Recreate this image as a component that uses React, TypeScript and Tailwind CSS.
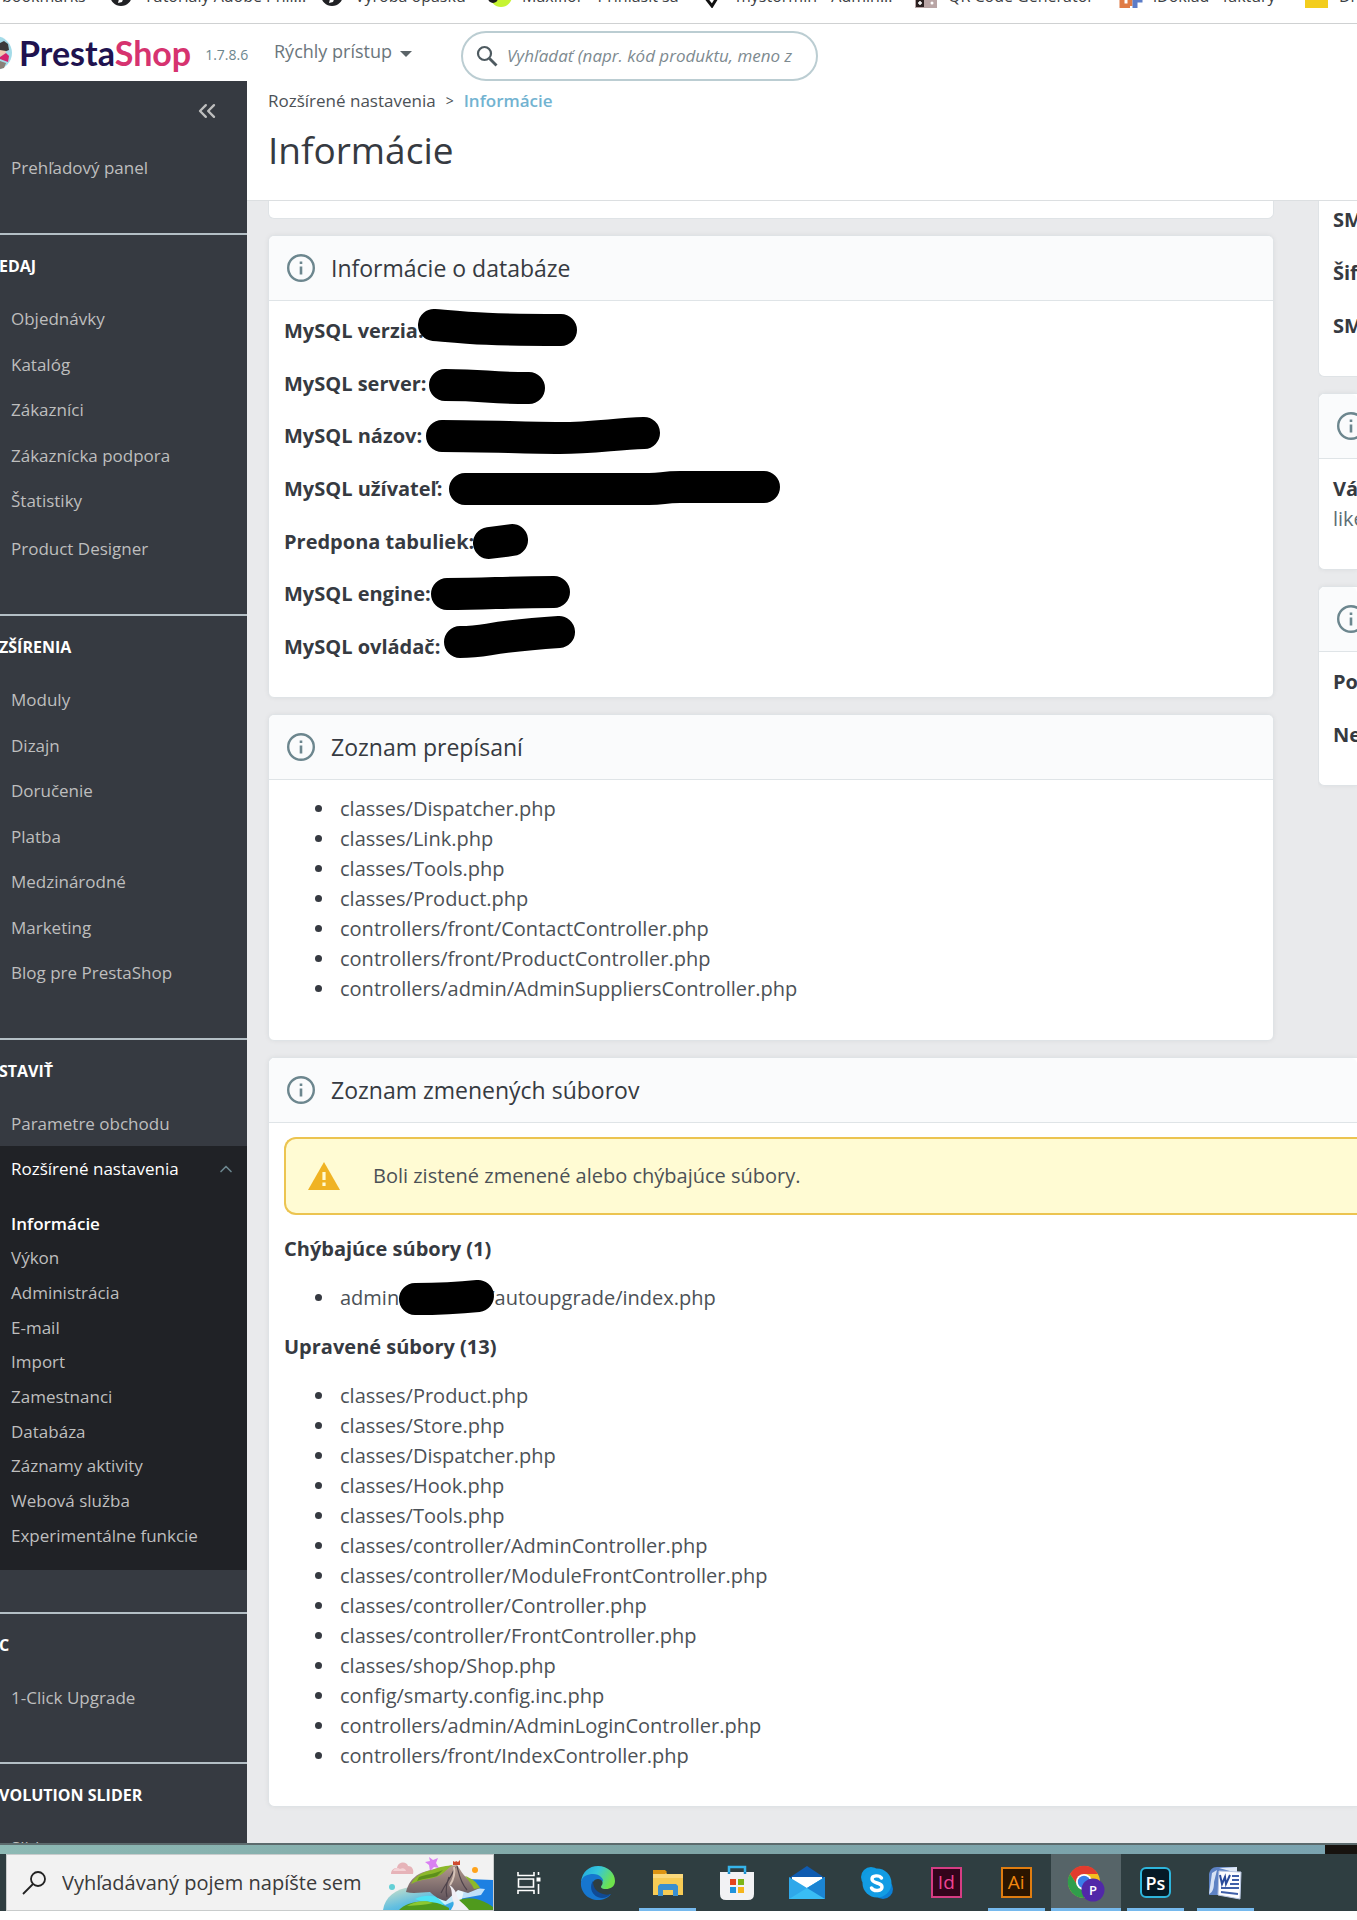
import type { ReactNode } from "react";
import { ChevronUp, ChevronsLeft } from "lucide-react";

const bookmarks: { label: string; width: string; icon: ReactNode }[] = [
  { label: "Tutoriály Adobe Phil...", width: "w-[211px]", icon: <Globe /> },
  { label: "Výroba opasku", width: "w-[167px]", icon: <Globe /> },
  {
    label: "Maxiflor • Prihlásiť sa",
    width: "w-[214px]",
    icon: (
      <svg viewBox="0 0 24 24" className="size-6">
        <circle cx="13" cy="12" r="11" fill="#c6f432" />
        <circle cx="5" cy="14" r="5" fill="#1c1c1c" />
      </svg>
    ),
  },
  {
    label: "mystormin • Admin...",
    width: "w-[212px]",
    icon: (
      <svg viewBox="0 0 24 24" className="size-6">
        <path d="M3 13l7 9 8-13" fill="none" stroke="#111" strokeWidth="3" />
      </svg>
    ),
  },
  {
    label: "QR Code Generator",
    width: "w-[205px]",
    icon: (
      <svg viewBox="0 0 24 24" className="size-6">
        <rect x="1" y="1" width="22" height="23" fill="#b9a5a5" />
        <rect x="2" y="15" width="8" height="8" fill="#2a2020" />
        <path d="M4 19h4M6 17v4" stroke="#fff" strokeWidth="1.5" />
        <circle cx="18" cy="19" r="1.5" fill="#fff" />
        <circle cx="17" cy="14" r="2" fill="#d94a4a" />
      </svg>
    ),
  },
  {
    label: "iDoklad - faktúry",
    width: "w-[186px]",
    icon: (
      <svg viewBox="0 0 24 24" className="size-6">
        <path d="M3 2v20h8M11 15v7" fill="none" stroke="#e07b45" strokeWidth="5" />
        <path d="M16 24V4M16 16h5V4" fill="none" stroke="#5b7cc8" strokeWidth="5" />
      </svg>
    ),
  },
  {
    label: "Dr",
    width: "w-[60px]",
    icon: (
      <svg viewBox="0 0 24 24" className="size-6">
        <rect x="0" y="2" width="23" height="22" fill="#f3cd1d" />
      </svg>
    ),
  },
];

function Globe() {
  return (
    <svg viewBox="0 0 24 24" className="size-6">
      <circle cx="11" cy="11" r="11" fill="#202124" />
      <path d="M6 4h9l4 6-5 3-2 5-4 1 1-4 4-2z" fill="#fff" />
    </svg>
  );
}

function InfoIcon() {
  return (
    <svg viewBox="0 0 28 28" className="size-7 shrink-0" fill="none" stroke="#6c868e">
      <circle cx="14" cy="14" r="12.8" strokeWidth="2.4" />
      <path d="M14 12.5v8M14 7.5v2.6" strokeWidth="2.6" />
    </svg>
  );
}

function Card({ title, cut, children }: { title: string; cut?: boolean; children: ReactNode }) {
  return (
    <section
      className={`border border-[#dfe3e6] bg-white shadow-[0_0_5px_rgba(0,0,0,0.06)] ${
        cut ? "rounded-l-md border-r-0" : "rounded-md"
      }`}
    >
      <header className="flex h-[65px] items-center gap-4 rounded-t-md border-b border-[#dfe4e7] bg-[#fafbfc] pl-[18px]">
        <InfoIcon />
        {title && <h2 className="text-[23px] font-medium whitespace-nowrap text-[#363a41]">{title}</h2>}
      </header>
      {children}
    </section>
  );
}

const listClass = "list-disc pl-[52px] text-[20px] leading-[30px] text-[#4c5156] marker:text-[#363a41]";

function FileList({ files }: { files: string[] }) {
  return (
    <ul className={listClass}>
      {files.map((f) => (
        <li key={f} className="pl-1">
          {f}
        </li>
      ))}
    </ul>
  );
}

const databaseRows = [
  { label: "MySQL verzia:", d: "M150 9C185 12 200 14 277 14" },
  { label: "MySQL server:", d: "M161 16C205 16 200 19 245 19" },
  { label: "MySQL názov:", d: "M158 15C205 15 240 17 276 17C310 17 330 13 360 12" },
  { label: "MySQL užívateľ:", d: "M181 15H365C380 15 378 13 396 13H480" },
  { label: "Predpona tabuliek:", d: "M205 16L228 13" },
  { label: "MySQL engine:", d: "M163 15C205 15 220 13 270 13" },
  { label: "MySQL ovládač:", d: "M176 10C205 10 200 5 275 0" },
];

const overrides = [
  "classes/Dispatcher.php",
  "classes/Link.php",
  "classes/Tools.php",
  "classes/Product.php",
  "controllers/front/ContactController.php",
  "controllers/front/ProductController.php",
  "controllers/admin/AdminSuppliersController.php",
];

const updatedFiles = [
  "classes/Product.php",
  "classes/Store.php",
  "classes/Dispatcher.php",
  "classes/Hook.php",
  "classes/Tools.php",
  "classes/controller/AdminController.php",
  "classes/controller/ModuleFrontController.php",
  "classes/controller/Controller.php",
  "classes/controller/FrontController.php",
  "classes/shop/Shop.php",
  "config/smarty.config.inc.php",
  "controllers/admin/AdminLoginController.php",
  "controllers/front/IndexController.php",
];

function NavHeading({ children }: { children: string }) {
  return (
    <h3 className="-ml-px mb-[14px] flex h-8 items-center text-[16px] font-bold whitespace-nowrap text-white">
      {children}
    </h3>
  );
}

function NavLink({ children }: { children: string }) {
  return (
    <li className="flex items-center pl-[11px]">
      <a href="#" className="whitespace-nowrap">
        {children}
      </a>
    </li>
  );
}

const sectionClass = "border-t-2 border-[#b4bfc5] pt-[15px]";

function Sidebar() {
  return (
    <nav className="flex w-[247px] shrink-0 flex-col overflow-hidden bg-[#363a41] text-[17px] text-[#bebebe]">
      <div className="shrink-0 pb-[43px]">
        <div className="flex h-[60px] items-center justify-end pr-[26px]">
          <button aria-label="Zbaliť menu">
            <ChevronsLeft className="size-7" strokeWidth={2} />
          </button>
        </div>
        <ul className="mt-1 grid h-[45px]">
          <NavLink>Prehľadový panel</NavLink>
        </ul>
      </div>

      <div className={`shrink-0 pb-[40px] ${sectionClass}`}>
        <NavHeading>EDAJ</NavHeading>
        <ul className="grid h-[228px] auto-rows-fr">
          <NavLink>Objednávky</NavLink>
          <NavLink>Katalóg</NavLink>
          <NavLink>Zákazníci</NavLink>
          <NavLink>Zákaznícka podpora</NavLink>
          <NavLink>Štatistiky</NavLink>
        </ul>
        <ul className="grid h-[50px]">
          <NavLink>Product Designer</NavLink>
        </ul>
      </div>

      <div className={`shrink-0 pb-[42px] ${sectionClass}`}>
        <NavHeading>ZŠÍRENIA</NavHeading>
        <ul className="grid h-[319px] auto-rows-fr">
          <NavLink>Moduly</NavLink>
          <NavLink>Dizajn</NavLink>
          <NavLink>Doručenie</NavLink>
          <NavLink>Platba</NavLink>
          <NavLink>Medzinárodné</NavLink>
          <NavLink>Marketing</NavLink>
          <NavLink>Blog pre PrestaShop</NavLink>
        </ul>
      </div>

      <div className={`shrink-0 pb-[42px] ${sectionClass}`}>
        <NavHeading>STAVIŤ</NavHeading>
        <ul className="grid h-[45px]">
          <NavLink>Parametre obchodu</NavLink>
        </ul>
        <div className="bg-[#202226] pb-[17px]">
          <button className="flex h-[46px] w-full items-center justify-between pr-[11px] pl-[11px] font-medium text-white">
            Rozšírené nastavenia
            <ChevronUp className="size-5 text-[#6c868e]" />
          </button>
          <ul className="mt-[14px] grid h-[347px] auto-rows-fr">
            <li className="flex items-center pl-[11px] font-semibold text-white">
              <a href="#">Informácie</a>
            </li>
            <NavLink>Výkon</NavLink>
            <NavLink>Administrácia</NavLink>
            <NavLink>E-mail</NavLink>
            <NavLink>Import</NavLink>
            <NavLink>Zamestnanci</NavLink>
            <NavLink>Databáza</NavLink>
            <NavLink>Záznamy aktivity</NavLink>
            <NavLink>Webová služba</NavLink>
            <NavLink>Experimentálne funkcie</NavLink>
          </ul>
        </div>
      </div>

      <div className={`shrink-0 pb-[42px] ${sectionClass}`}>
        <NavHeading>C</NavHeading>
        <ul className="grid h-[45px]">
          <NavLink>1-Click Upgrade</NavLink>
        </ul>
      </div>

      <div className={`shrink-0 ${sectionClass}`}>
        <NavHeading>VOLUTION SLIDER</NavHeading>
        <ul className="grid h-[45px]">
          <NavLink>Slider</NavLink>
        </ul>
      </div>
    </nav>
  );
}

function TopBar() {
  return (
    <header className="flex h-[57px] shrink-0 items-center bg-white">
      <div className="flex w-[247px] shrink-0 items-center">
        <svg viewBox="0 0 12 36" className="h-9 w-3 shrink-0">
          <circle cx="-5" cy="18" r="17" fill="#a4dbe8" />
          <path d="M0 8l4-2 4 3 1 6-5 2H0z" fill="#3c3a3a" />
          <path d="M0 15l6 1-1 4-5 1z" fill="#f0c9b0" />
          <path d="M0 22l6-4 3 3-1 6-8-3z" fill="#d6246e" />
          <path d="M0 26l6 2-2 5-4 1z" fill="#8a8078" />
        </svg>
        <div className="ml-[7px] text-[34px] leading-10 font-bold text-[#20124f]" style={{ fontFamily: "Lato, sans-serif" }}>
          Presta<span className="text-[#d6336f]">Shop</span>
        </div>
        <span className="mt-1 ml-[14px] text-[14px] text-[#6c868e]">1.7.8.6</span>
      </div>
      <button className="mb-[2px] ml-[27px] flex w-[187px] items-center gap-2 text-[18px] text-[#6b767c]">
        Rýchly prístup
        <svg viewBox="0 0 12 6" className="mt-1 h-1.5 w-3">
          <path d="M0 0h12l-6 6z" fill="#5b6468" />
        </svg>
      </button>
      <label className="mt-[6px] flex h-[50px] w-[357px] items-center gap-2 rounded-full border-2 border-[#bbcdd2] px-3">
        <svg viewBox="0 0 24 24" className="size-6 shrink-0" fill="none" stroke="#4e5a60">
          <circle cx="9.5" cy="9.5" r="6.5" strokeWidth="2.2" />
          <path d="M14.5 14.5l7 7" strokeWidth="2.8" />
        </svg>
        <input
          aria-label="Vyhľadať"
          placeholder="Vyhľadať (napr. kód produktu, meno z"
          className="w-full bg-transparent text-[17px] italic outline-none placeholder:text-[#7d8a90]"
        />
      </label>
    </header>
  );
}

function Main() {
  return (
    <main className="flex min-w-0 flex-1 flex-col bg-[#e9eaec]">
      <div className="h-[120px] shrink-0 border-b border-[#dcdfe1] bg-white pl-[21px]">
        <nav className="flex h-[39px] items-center gap-[10px] text-[17px] text-[#4c5156]">
          <a href="#">Rozšírené nastavenia</a>
          <span className="text-[14px]">&gt;</span>
          <a href="#" className="font-semibold text-[#72b3d1]">
            Informácie
          </a>
        </nav>
        <h1 className="mt-[5px] text-[37px] leading-[50px] text-[#363a41]">Informácie</h1>
      </div>

      <div className="pl-[21px]">
        <div className="grid grid-cols-[minmax(0,1fr)_39px] gap-x-[44px]">
          <div className="flex flex-col gap-4">
            <div className="h-[18px] rounded-b-md border border-t-0 border-[#dfe3e6] bg-white" />
            <Card title="Informácie o databáze">
              <ul className="mt-[15px] mb-[35px] ml-[15px] flex h-[346px] flex-col justify-between">
                {databaseRows.map((row) => (
                  <li key={row.label} className="relative text-[20px] leading-[30px] font-bold text-[#363a41]">
                    {row.label}
                    <svg className="absolute top-0 left-0 h-[30px] w-[500px] overflow-visible" viewBox="0 0 500 30">
                      <path d={row.d} fill="none" stroke="#000" strokeWidth="32" strokeLinecap="round" />
                    </svg>
                  </li>
                ))}
              </ul>
            </Card>
            <Card title="Zoznam prepísaní">
              <div className="pt-[14px] pl-[15px] pb-[36px]">
                <FileList files={overrides} />
              </div>
            </Card>
          </div>

          <div className="flex flex-col gap-4 overflow-hidden text-[20px] leading-[30px] font-bold whitespace-nowrap text-[#363a41]">
            <div className="h-[176px] rounded-bl-md border-b border-l border-[#dfe3e6] bg-white pl-[14px]">
              <p className="mt-1">SM</p>
              <p className="mt-[23px]">Šif</p>
              <p className="mt-[23px]">SM</p>
            </div>
            <Card title="" cut>
              <div className="h-[110px] pt-[15px] pl-[14px]">
                <p>Vá</p>
                <p className="font-normal text-[#5d6d74]">like</p>
              </div>
            </Card>
            <Card title="" cut>
              <div className="h-[133px] pt-[15px] pl-[14px]">
                <p>Po</p>
                <p className="mt-[23px]">Ne</p>
              </div>
            </Card>
          </div>
        </div>

        <div className="mt-4">
          <Card title="Zoznam zmenených súborov" cut>
            <div className="pt-[14px] pb-[35px] pl-[15px] text-[20px] leading-[30px] text-[#363a41]">
              <div
                role="alert"
                className="flex h-[78px] items-center rounded-l-xl border-2 border-r-0 border-[#ecc450] bg-[#fffbd3] pl-[22px] text-[#4c5156]"
              >
                <svg viewBox="0 0 32 28" className="h-7 w-8">
                  <path d="M16 0l16 28H0z" fill="#f0b323" />
                  <path d="M16 10v8M16 20.500v3.500" stroke="#fffbd3" strokeWidth="3.200" />
                </svg>
                <p className="ml-[33px]">Boli zistené zmenené alebo chýbajúce súbory.</p>
              </div>
              <h3 className="mt-[19px] font-bold">Chýbajúce súbory (1)</h3>
              <ul className={`my-[19px] ${listClass}`}>
                <li className="pl-1">
                  admin
                  <span className="relative inline-block h-4 w-[88px]">
                    <svg className="absolute top-0 left-0 h-4 w-[95px] overflow-visible" viewBox="0 0 95 16">
                      <path d="M16 10C45 10 60 9 79 7" fill="none" stroke="#000" strokeWidth="32" strokeLinecap="round" />
                    </svg>
                  </span>
                  /autoupgrade/index.php
                </li>
              </ul>
              <h3 className="mb-[19px] font-bold">Upravené súbory (13)</h3>
              <FileList files={updatedFiles} />
            </div>
          </Card>
        </div>
      </div>
    </main>
  );
}

function Island() {
  return (
    <svg viewBox="0 0 110 55" className="h-[55px] w-[110px] shrink-0">
      <defs>
        <linearGradient id="sea" x1="0" y1="0" x2="1" y2="1">
          <stop offset="0" stopColor="#d8e3c5" />
          <stop offset="0.5" stopColor="#62bfe0" />
          <stop offset="1" stopColor="#1f9de8" />
        </linearGradient>
        <linearGradient id="rock" x1="0" y1="0" x2="0" y2="1">
          <stop offset="0" stopColor="#b39a8e" />
          <stop offset="1" stopColor="#5f525a" />
        </linearGradient>
      </defs>
      <path d="M84 24l26 1v30H76z" fill="#1d80e2" />
      <path d="M0 55C2 42 12 34 28 32l40 4 14 19z" fill="url(#sea)" />
      <path d="M32 44c12-6 24-3 32 4l-10 4z" fill="#4de3f5" />
      <path d="M50 38l12 12 14-6 22-4 4-6-20-2z" fill="#e8f7ff" opacity="0.8" />
      <path d="M8 19c0-5 4-6 6-6 1-7 10-7 11-2 5 0 6 5 5 8z" fill="#e6b3b8" />
      <path d="M10 16c1-3 5-4 7-2 3-2 6 0 6 2z" fill="#f4d3d6" />
      <path d="M46 2l4 3 5-2-2 5 3 5-5-1-4 4-1-6-4-3 5-1z" fill="#d980f2" />
      <path d="M23 37c2-8 6-14 13-18 8-4 22-7 38-9 4 6 8 13 14 16 4 2 8 4 9 7l-12 5-10-3-12 11c-6-1-12-5-16-9-8 0-16 2-24 0z" fill="url(#rock)" />
      <path d="M28 29c4-9 14-13 22-14 7-4 14-4 20-5-8 5-10 10-17 12-9 3-16 2-25 7z" fill="#8cb82a" />
      <path d="M36 22c8-3 16-3 24-7l-6 6c-6 2-12 2-20 5z" fill="#5c8f1c" />
      <path d="M82 21c6 2 12 6 15 12l-6 1c-2-5-6-9-9-13z" fill="#8cb82a" />
      <path d="M74 11c2 8 3 16 10 24M72 12c-2 8-8 14-14 26M66 22c-2 6-4 12-2 20" stroke="#4e434b" strokeWidth="1.200" fill="none" />
      <path d="M71 12c1 6 0 12-4 18" stroke="#d6c3b8" strokeWidth="2" fill="none" />
      <path d="M70 10V6l2 1 1-1 2 1 2-2v5z" fill="#cf4a2f" />
      <circle cx="92" cy="15" r="3" fill="#ffa31a" />
      <circle cx="9" cy="32" r="3" fill="#63d0d6" />
      <path d="M16 55c8-10 34-12 50-2v2z" fill="#4f9a1d" />
      <path d="M24 51c8-5 18-6 26-3-8 2-16 2-26 3z" fill="#8cc832" />
      <path d="M74 46c10-5 24-3 36 6v3H76z" fill="#4f9a1d" />
      <path d="M66 30c4 5 2 10 4 16 2 4-1 6-2 9h18c-4-6-10-8-12-14-1-5-4-9-8-11z" fill="#f1eff5" />
    </svg>
  );
}

function TaskView() {
  return (
    <svg viewBox="0 0 24 24" className="size-6" fill="none" stroke="#fff" strokeWidth="1.600">
      <path d="M1 1v3.500h16V1M1 23v-3.500h16V23M1.500 8h15v8h-15zM21.500 1v3M21.500 13v10" />
      <path d="M19.500 6.500h4v4h-4z" fill="#fff" stroke="none" />
    </svg>
  );
}

function Edge() {
  return (
    <svg viewBox="0 0 36 36" className="size-9">
      <defs>
        <linearGradient id="edgeTop" x1="0" y1="0" x2="1" y2="0.400">
          <stop offset="0" stopColor="#1fa5dd" />
          <stop offset="0.500" stopColor="#35c6dc" />
          <stop offset="1" stopColor="#6ee24c" />
        </linearGradient>
      </defs>
      <path d="M1 17C2 7 9 1 18 1c10 0 17 7 17 15 0 6-5 8-9 8-5 0-6-2-4-4 2-3-1-8-6-8C8 12 2 15 1 17z" fill="url(#edgeTop)" />
      <path d="M1 17c1-6 7-8 12-8 7 0 11 5 10 8-2-4-8-4-10 0-3 7 2 13 9 14 4 0 7-1 9-2-3 4-8 6-13 6C8 35 0 27 1 17z" fill="#1676cf" />
      <path d="M13 16c-4 5-2 16 9 17 4 0 7-2 9-4-3 1-5 1-8 0-8-2-10-8-10-13z" fill="#104a94" />
    </svg>
  );
}

function Folder() {
  return (
    <svg viewBox="0 0 32 28" className="h-7 w-8">
      <path d="M1 2h12l2 3h16v21H1z" fill="#f7cb55" />
      <path d="M1 1h12l2 2-2 2H1z" fill="#dd9413" />
      <path d="M1 5h30v4H1z" fill="#fbd97c" />
      <path d="M6 27V17l2-2h16l2 2v10h-5v-6H11v6z" fill="#3b8fd0" />
      <path d="M11 21h10v5H11z" fill="#f7cb55" />
    </svg>
  );
}

function Store() {
  return (
    <svg viewBox="0 0 36 36" className="size-9">
      <path d="M10 10V2h16v8" fill="none" stroke="#36b4ea" strokeWidth="2.500" />
      <path d="M1 7h34v22q0 6-6 6H7q-6 0-6-6z" fill="#f2f2f4" />
      <path d="M10 9V7M26 9V7" stroke="#1b8fd0" strokeWidth="2.500" />
      <path d="M11 14h6v6h-6z" fill="#e5441f" />
      <path d="M19 14h6v6h-6z" fill="#7cb518" />
      <path d="M11 22h6v6h-6z" fill="#1f93dc" />
      <path d="M19 22h6v6h-6z" fill="#f6b51c" />
    </svg>
  );
}

function Mail() {
  return (
    <svg viewBox="0 0 36 34" className="h-[34px] w-9">
      <path d="M0 12L18 0l18 12z" fill="#0f5bb0" />
      <path d="M3 11h30v12H3z" fill="#fff" />
      <path d="M0 11l18 11L36 11v22H0z" fill="#2fa8ea" />
      <path d="M0 33L36 11v22z" fill="#39bdf4" />
      <path d="M18 22l18 11V11z" fill="#1b84d2" />
    </svg>
  );
}

function Skype() {
  return (
    <svg viewBox="0 0 34 34" className="size-[34px]">
      <circle cx="11" cy="11" r="10" fill="#0e9be2" />
      <circle cx="23" cy="23" r="10" fill="#0c7fd6" />
      <circle cx="17" cy="17" r="14.500" fill="#129ce4" />
      <path
        d="M21.500 12c-2-3-9.500-3-9.500 1 0 5 10 3 10 8 0 4-8 5-10.500 1"
        fill="none"
        stroke="#fff"
        strokeWidth="3.400"
        strokeLinecap="round"
      />
    </svg>
  );
}

function Chrome() {
  return (
    <svg viewBox="0 0 38 38" className="size-[38px]">
      <circle cx="17" cy="18" r="16" fill="#f5bd1f" />
      <path d="M3 10a16 16 0 0 1 28 0H17l-6 12z" fill="#e23b2e" />
      <path d="M3 10a16 16 0 0 0 14 24l7-12-13 0z" fill="#2f9e4b" />
      <circle cx="17" cy="18" r="8" fill="#fff" />
      <circle cx="17" cy="18" r="6.200" fill="#3b7de8" />
      <circle cx="26" cy="26" r="11.500" fill="#5128a8" />
      <text x="26" y="31" textAnchor="middle" fontSize="13" fill="#fff" fontFamily="Open Sans, sans-serif" fontWeight="600">
        P
      </text>
    </svg>
  );
}

function Word() {
  return (
    <svg viewBox="0 0 34 34" className="size-[34px]">
      <path d="M1 8c1-4 3-7 8-7h20v28H1z" fill="#5d82c4" />
      <path d="M1 28c4-2 5-6 5-12L9 4l-5 3z" fill="#d6e2f5" />
      <path d="M11 2l18-1v6z" fill="#dfe8f7" />
      <path d="M11 5l22 1-1 27-22-4z" fill="#fdfdff" stroke="#b8c6e2" />
      <path d="M24 10h7M24 14h7M22 18h9M13 22h18M13 26l17 2" stroke="#3e5ea8" strokeWidth="2" />
      <path d="M12 9l2 9 3-7 1 7 4-9" fill="none" stroke="#2a4b9b" strokeWidth="2" />
    </svg>
  );
}

const tasks: { name: string; icon: ReactNode; state: string }[] = [
  { name: "Edge", icon: <Edge />, state: "idle" },
  { name: "Prieskumník", icon: <Folder />, state: "open" },
  { name: "Store", icon: <Store />, state: "idle" },
  { name: "Pošta", icon: <Mail />, state: "idle" },
  { name: "Skype", icon: <Skype />, state: "idle" },
  {
    name: "InDesign",
    state: "idle",
    icon: (
      <span className="flex size-[31px] items-center justify-center border-2 border-[#d63d84] bg-[#33041c] text-[19px] leading-none text-[#ee4393]">
        Id
      </span>
    ),
  },
  {
    name: "Illustrator",
    state: "open",
    icon: (
      <span className="flex size-[31px] items-center justify-center border-2 border-[#e07d10] bg-[#2b1500] text-[19px] leading-none text-[#f0870f]">
        Ai
      </span>
    ),
  },
  { name: "Chrome", icon: <Chrome />, state: "active" },
  {
    name: "Photoshop",
    state: "open",
    icon: (
      <span className="flex size-[31px] items-center justify-center rounded-md border-2 border-[#2eb5dc] bg-[#051a26] text-[18px] leading-none font-semibold text-white">
        Ps
      </span>
    ),
  },
  { name: "Word", icon: <Word />, state: "open" },
];

function Taskbar() {
  return (
    <footer className="shrink-0">
      <div className="flex h-[11px] border-t-2 border-[#5c6b6d] bg-linear-to-r from-[#8db9b4] via-[#7fa5a6] to-[#7aa3b0]">
        <div className="ml-auto w-8 bg-[#17130f]" />
      </div>
      <div className="flex h-[57px] items-stretch bg-[#2f3e41]">
        <label className="ml-[6px] flex w-[488px] shrink-0 items-center border border-[#c9cccc] bg-[#f2f2f2] pl-[15px]">
          <svg viewBox="0 0 24 24" className="size-6 shrink-0" fill="none" stroke="#222" strokeWidth="1.800">
            <circle cx="16" cy="8" r="7" />
            <path d="M11 13L1 23" />
          </svg>
          <input
            aria-label="Vyhľadávanie"
            placeholder="Vyhľadávaný pojem napíšte sem"
            className="ml-4 min-w-0 flex-1 bg-transparent text-[20px] outline-none placeholder:text-[#3a3a3a]"
          />
          <Island />
        </label>
        <button aria-label="Zobrazenie úloh" className="flex w-[69px] shrink-0 items-center justify-center">
          <TaskView />
        </button>
        <div className="grid w-[697px] grid-cols-10">
          {tasks.map((t) => (
            <button
              key={t.name}
              aria-label={t.name}
              className={`relative flex items-center justify-center ${t.state === "active" ? "bg-[#566468]" : ""}`}
            >
              {t.icon}
              {t.state === "open" && <span className="absolute bottom-0 h-[3px] w-[57px] bg-[#76b9ed]" />}
              {t.state === "active" && <span className="absolute bottom-0 h-[3px] w-full bg-[#76b9ed]" />}
            </button>
          ))}
        </div>
      </div>
      <div className="h-[9px] bg-white" />
    </footer>
  );
}

export default function App() {
  return (
    <div
      className="flex h-screen flex-col overflow-hidden bg-white"
      style={{ fontFamily: '"Open Sans", "Noto Sans", sans-serif' }}
    >
      <div className="h-6 shrink-0 overflow-hidden border-b border-[#cfd1d2]">
        <div className="-mt-4 flex h-6 items-center text-[16px] whitespace-nowrap text-[#3c4043]">
          <a href="#" className="w-[110px] shrink-0 pl-[2px]">
            bookmarks
          </a>
          {bookmarks.map((b) => (
            <a key={b.label} href="#" className={`flex shrink-0 items-center gap-[10px] ${b.width}`}>
              {b.icon}
              {b.label}
            </a>
          ))}
        </div>
      </div>
      <TopBar />
      <div className="flex min-h-0 flex-1 overflow-hidden">
        <Sidebar />
        <Main />
      </div>
      <Taskbar />
    </div>
  );
}
